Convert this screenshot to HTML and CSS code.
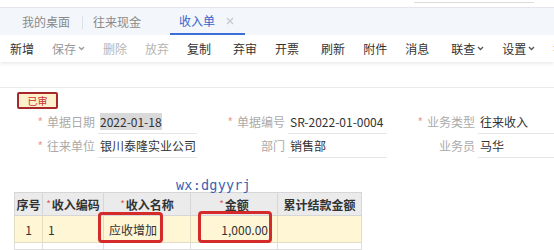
FILE: index.html
```html
<!DOCTYPE html>
<html lang="zh-CN">
<head>
    <meta charset="UTF-8">
    <title>收入单</title>
    <link rel="stylesheet" href="styles.css">
</head>
<body>

    <div class="top">
        <div class="search"></div>
    </div>

    <div class="tabs">
        <span class="tab tab-first">我的桌面</span>
        <span class="tab-sep"></span>
        <span class="tab">往来现金</span>
        <span class="tab tab-active">收入单
            <svg class="close" width="8" height="8" viewBox="0 0 8 8"><path d="M1 1L7 7M7 1L1 7" stroke="#c4c8d0" stroke-width="1.1"/></svg>
        </span>
    </div>

    <div class="toolbar">
        <span class="btn">新增</span>
        <span class="btn off">保存<svg class="chev" width="7" height="5" viewBox="0 0 7 5"><path d="M1 1L3.5 3.5L6 1" fill="none" stroke="#999" stroke-width="1.3"/></svg></span>
        <span class="btn dis">删除</span>
        <span class="btn dis">放弃</span>
        <span class="btn">复制</span>
        <span class="sep"></span>
        <span class="btn">弃审</span>
        <span class="btn">开票</span>
        <span class="sep"></span>
        <span class="btn">刷新</span>
        <span class="btn">附件</span>
        <span class="btn">消息</span>
        <span class="sep"></span>
        <span class="btn">联查<svg class="chev" width="7" height="5" viewBox="0 0 7 5"><path d="M1 1L3.5 3.5L6 1" fill="none" stroke="#555" stroke-width="1.3"/></svg></span>
        <span class="btn">设置<svg class="chev" width="7" height="5" viewBox="0 0 7 5"><path d="M1 1L3.5 3.5L6 1" fill="none" stroke="#555" stroke-width="1.3"/></svg></span>
        <span class="btn">打印</span>
    </div>

    <div class="head-gap"></div>

    <div class="bill">
        <div class="badge">已审</div>

        <div class="form">
            <div class="field">
                <label><i>*</i>单据日期</label>
                <div class="val"><span class="sel">2022-01-18</span></div>
            </div>
            <div class="field">
                <label><i>*</i>单据编号</label>
                <div class="val">SR-2022-01-0004</div>
            </div>
            <div class="field">
                <label><i>*</i>业务类型</label>
                <div class="val">往来收入</div>
            </div>
            <div class="field">
                <label><i>*</i>往来单位</label>
                <div class="val">银川泰隆实业公司</div>
            </div>
            <div class="field">
                <label>部门</label>
                <div class="val">销售部</div>
            </div>
            <div class="field">
                <label>业务员</label>
                <div class="val">马华</div>
            </div>
        </div>

        <div class="mark">wx:dgyyrj</div>

        <div class="grid-wrap">
            <table class="grid">
                <tr>
                    <th class="c1">序号</th>
                    <th class="c2"><i>*</i>收入编码</th>
                    <th class="c3"><i>*</i>收入名称</th>
                    <th class="c4"><i>*</i>金额</th>
                    <th class="c5">累计结款金额</th>
                </tr>
                <tr class="cur">
                    <td class="center">1</td>
                    <td>1</td>
                    <td>应收增加</td>
                    <td class="right">1,000.00</td>
                    <td></td>
                </tr>
                <tr class="empty">
                    <td></td>
                    <td></td>
                    <td></td>
                    <td></td>
                    <td></td>
                </tr>
            </table>
            <div class="hl hl-name"></div>
            <div class="hl hl-amount"></div>
        </div>
    </div>

</body>
</html>
```

FILE: styles.css
```css
* {
    box-sizing: border-box;
}
body {
    font-family: "Noto Sans CJK SC", "Liberation Sans", sans-serif;
    font-size: 12px;
    margin: 0;
    padding: 0;
    background-color: white;
    color: #333;
    width: 554px;
    height: 250px;
    overflow: hidden;
}
.top {
    height: 8px;
    border-bottom: 1px solid #e3e6ec;
    display: flex;
}
.search {
    margin-left: 414px;
    width: 120px;
    height: 3px;
    border-bottom: 1px solid #dcdcdc;
}
.tabs {
    height: 27px;
    background-color: #f3f6fb;
    display: flex;
    align-items: stretch;
    padding-left: 22px;
}
.tab {
    color: #8a8a8a;
    line-height: 26px;
    display: flex;
    align-items: center;
}
.tab-first {
    margin-right: 12px;
}
.tab-sep {
    width: 1px;
    height: 13px;
    background-color: #dde0e6;
    margin-top: 8px;
    margin-right: 10px;
}
.tab-active {
    margin-left: 29px;
    padding: 0 11px 0 9px;
    color: #3366cc;
    border-bottom: 2px solid #3a6fd8;
}
.close {
    margin-left: 11px;
}
.toolbar {
    height: 27px;
    display: flex;
    align-items: center;
    padding-left: 1px;
    background-color: white;
    box-shadow: 0 2px 3px rgba(0, 0, 0, 0.08);
    white-space: nowrap;
    overflow: hidden;
}
.btn {
    padding: 0 9px;
    color: #333;
    display: flex;
    align-items: center;
}
.btn.off {
    color: #999;
}
.btn.dis {
    color: #b5b5b5;
}
.chev {
    margin-left: 2px;
}
.sep {
    width: 1px;
    height: 13px;
    background-color: #e2e2e2;
    margin: 0 2px;
}
.head-gap {
    height: 26px;
    border-bottom: 1px solid #ebebeb;
}
.bill {
    position: relative;
}
.badge {
    margin: 4px 0 0 17px;
    width: 41px;
    height: 17px;
    border: 2px solid #a8282a;
    border-radius: 2px;
    background-color: #fdf1cd;
    color: #d0312f;
    font-size: 10px;
    line-height: 13px;
    text-align: center;
}
.form {
    margin-top: 2px;
    padding-left: 8px;
    display: grid;
    grid-template-columns: 190px 190px 166px;
    row-gap: 1px;
    overflow: hidden;
}
.field {
    display: flex;
    height: 23px;
}
.field label {
    flex: none;
    width: 90px;
    padding-right: 3px;
    text-align: right;
    color: #aaa;
    line-height: 22px;
}
.field label i {
    font-style: normal;
    color: #f29a9a;
    margin-right: 4px;
}
.val {
    flex: none;
    width: 99px;
    padding-left: 2px;
    line-height: 22px;
    border-bottom: 1px solid #e6e6e6;
    white-space: nowrap;
    color: #333;
}
.sel {
    background-color: #d9d9d9;
}
.mark {
    position: absolute;
    z-index: 2;
    left: 176px;
    top: 85px;
    line-height: 16px;
    font-family: "DejaVu Sans Mono", monospace;
    font-size: 13.5px;
    color: #3b5fb5;
    letter-spacing: 0.2px;
}
.grid-wrap {
    position: relative;
    margin: 34px 0 0 14px;
    width: 347px;
}
.grid {
    border-collapse: collapse;
    table-layout: fixed;
    width: 347px;
}
.grid th {
    height: 23px;
    background-color: #ebebeb;
    border: 1px solid #d6d6d6;
    font-weight: bold;
    color: #333;
    padding: 0;
    text-align: center;
}
.grid th i {
    font-style: normal;
    font-weight: normal;
    color: #e05a5a;
    font-size: 10px;
    vertical-align: top;
    margin-right: 1px;
}
.grid td {
    height: 27px;
    border: 1px solid #e4dcc0;
    padding: 0 5px;
}
.grid .cur td {
    background-color: #fff6d5;
}
.grid .empty td {
    height: 7px;
    border-color: #dedede;
}
.c1 { width: 28px; }
.c2 { width: 61px; }
.c3 { width: 87px; }
.c4 { width: 87px; }
.c5 { width: 84px; }
.center {
    text-align: center;
}
.right {
    text-align: right;
}
.grid td.right {
    padding-right: 9px;
}
.hl {
    position: absolute;
    border: 3px solid #d52a2a;
    border-radius: 4px;
}
.hl-name {
    left: 84px;
    top: 20px;
    width: 65px;
    height: 31px;
}
.hl-amount {
    left: 184px;
    top: 19px;
    width: 74px;
    height: 32px;
}
```
